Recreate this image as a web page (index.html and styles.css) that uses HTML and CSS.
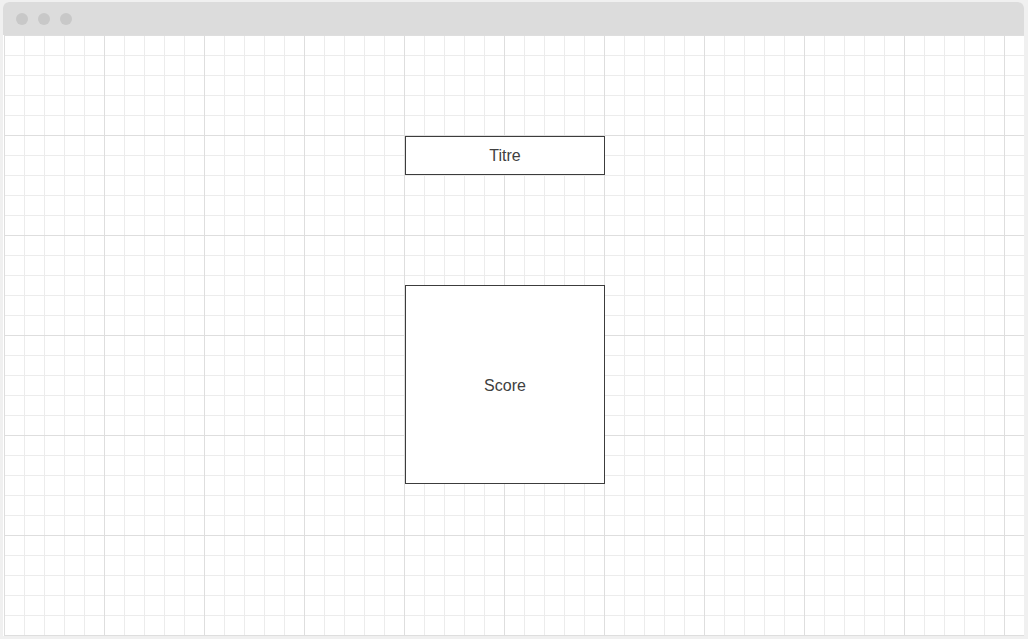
FILE: index.html
```html
<!DOCTYPE html>
<html lang="fr">
<head>
<meta charset="utf-8">
<title>Wireframe</title>
<link rel="stylesheet" href="styles.css">
</head>
<body>
<div class="window">
  <div class="titlebar">
    <span class="dot"></span>
    <span class="dot"></span>
    <span class="dot"></span>
  </div>
  <div class="canvas">
    <div class="box title-box">Titre</div>
    <div class="box score-box">Score</div>
  </div>
</div>
</body>
</html>
```
FILE: styles.css
```css
html, body {
  margin: 0;
  padding: 0;
  height: 100%;
}
body {
  background: #f0f0f0;
  padding: 2px 4px 3px 3px;
  box-sizing: border-box;
  font-family: "Liberation Sans", Arial, sans-serif;
}
.window {
  height: 100%;
  display: flex;
  flex-direction: column;
  border-radius: 6px 6px 0 0;
  overflow: hidden;
  background: #ffffff;
}
.titlebar {
  height: 33px;
  flex: none;
  background: #dcdcdc;
  display: flex;
  align-items: center;
  gap: 10px;
  padding-left: 13px;
}
.dot {
  width: 12px;
  height: 12px;
  border-radius: 50%;
  background: #c8c8c8;
}
.canvas {
  flex: 1;
  margin-left: 1px;
  background-color: #ffffff;
  background-image:
    linear-gradient(to right, #dedede 1px, transparent 1px),
    linear-gradient(to bottom, #dedede 1px, transparent 1px),
    linear-gradient(to right, #ececec 1px, transparent 1px),
    linear-gradient(to bottom, #ececec 1px, transparent 1px);
  background-size: 100px 100px, 100px 100px, 20px 20px, 20px 20px;
  background-position: 0 0;
  display: flex;
  flex-direction: column;
  align-items: flex-start;
  padding: 101px 0 0 401px;
  box-sizing: border-box;
}
.box {
  width: 200px;
  box-sizing: border-box;
  border: 1px solid #3c3c3c;
  background: #ffffff;
  color: #404040;
  font-size: 16px;
  display: flex;
  align-items: center;
  justify-content: center;
}
.title-box {
  height: 39px;
}
.score-box {
  height: 199px;
  margin-top: 110px;
  padding-top: 2px;
}
```
